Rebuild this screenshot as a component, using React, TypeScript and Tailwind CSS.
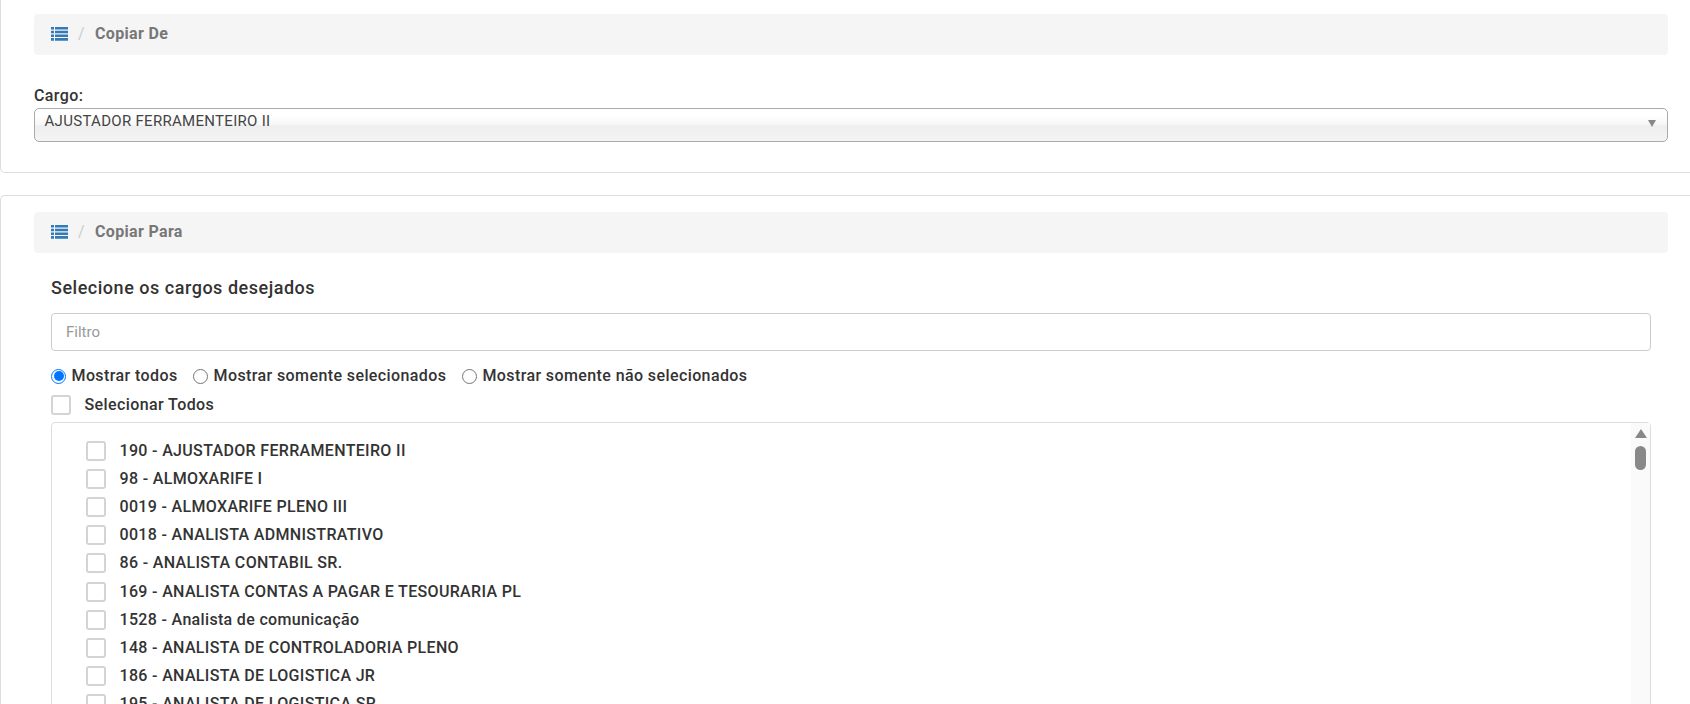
import React from 'react';

const cargos = [
  '190 - AJUSTADOR FERRAMENTEIRO II',
  '98 - ALMOXARIFE I',
  '0019 - ALMOXARIFE PLENO III',
  '0018 - ANALISTA ADMNISTRATIVO',
  '86 - ANALISTA CONTABIL SR.',
  '169 - ANALISTA CONTAS A PAGAR E TESOURARIA PL',
  '1528 - Analista de comunicação',
  '148 - ANALISTA DE CONTROLADORIA PLENO',
  '186 - ANALISTA DE LOGISTICA JR',
  '195 - ANALISTA DE LOGISTICA SR',
];

function ListIcon() {
  return (
    <svg viewBox="0 0 17 14" className="h-[14px] w-[17px] fill-[#337ab7]">
      <path d="M0 0h3v2.6H0zM4 0h13v2.6H4zM0 3.7h3v2.6H0zM4 3.7h13v2.6H4zM0 7.4h3V10H0zM4 7.4h13V10H4zM0 11.1h3v2.6H0zM4 11.1h13v2.6H4z" />
    </svg>
  );
}

function Breadcrumb({ title }: { title: string }) {
  return (
    <div className="flex h-[41px] items-center rounded-[4px] bg-[#f5f5f5] pb-[1px] pl-[17px] text-[16px] tracking-[.34px]">
      <ListIcon />
      <span className="ml-[10px] text-[#ccc]">/</span>
      <span className="ml-[10px] font-bold text-[#777]">{title}</span>
    </div>
  );
}

function Checkbox() {
  return <span className="h-[20px] w-[20px] shrink-0 rounded-[3px] border-2 border-[#d4d4d4] bg-white" />;
}

function Radio({ checked, label }: { checked?: boolean; label: string }) {
  return (
    <label className="flex items-center">
      {checked ? (
        <span className="flex h-[15px] w-[15px] items-center justify-center rounded-full border-[1.5px] border-[#0075ff]">
          <span className="h-[10px] w-[10px] rounded-full bg-[#0075ff]" />
        </span>
      ) : (
        <span className="h-[15px] w-[15px] rounded-full border border-[#767676] bg-white" />
      )}
      <span className="ml-[5.5px]">{label}</span>
    </label>
  );
}

export default function App() {
  return (
    <div className="h-[704px] overflow-hidden bg-white font-['Roboto',sans-serif] text-[#333]">
      <div className="-mt-[8px] h-[181px] rounded-bl-[5px] border-b border-l border-[#ddd] pl-[33px] pr-[22px] pt-[22px]">
        <Breadcrumb title="Copiar De" />
        <div className="mt-[31px] text-[16px] font-medium leading-[20px] tracking-[.4px]">Cargo:</div>
        <div className="relative mt-[2px] flex h-[34px] items-center rounded-[5px] border border-[#aaa] bg-[linear-gradient(#fff_20%,#f6f6f6_50%,#eee_52%,#f4f4f4_100%)] pb-[7px] pl-[9.5px] text-[15px] tracking-[.3px] text-[#444]">
          AJUSTADOR FERRAMENTEIRO II
          <span className="absolute right-[11px] top-[11px] h-0 w-0 border-x-[4.5px] border-t-[7px] border-x-transparent border-t-[#888]" />
        </div>
      </div>

      <div className="mt-[22px] rounded-tl-[5px] border-l border-t border-[#ddd] pl-[33px] pr-[22px] pt-[16px]">
        <Breadcrumb title="Copiar Para" />
        <div className="pl-[17px] pr-[17px]">
          <h2 className="mt-[24px] text-[18px] font-medium leading-[22px] tracking-[.52px]">Selecione os cargos desejados</h2>
          <input
            placeholder="Filtro"
            className="mt-[14px] block h-[38px] w-full rounded-[4px] border border-[#ccc] px-[14px] text-[15px] outline-none placeholder:text-[#999]"
          />
          <div className="mt-[15px] flex gap-[15.5px] text-[16px] font-medium leading-[20px] tracking-[.4px]">
            <Radio checked label="Mostrar todos" />
            <Radio label="Mostrar somente selecionados" />
            <Radio label="Mostrar somente não selecionados" />
          </div>
          <div className="mt-[7px] flex items-center text-[16px] font-medium tracking-[.4px]">
            <Checkbox />
            <span className="ml-[13.5px]">Selecionar Todos</span>
          </div>
          <div className="mt-[5px] flex h-[400px] rounded-[4px] border border-[#ddd]">
            <div className="flex-1 pl-[34px] pt-[14px] text-[16px] font-medium tracking-[.33px]">
              {cargos.map((cargo) => (
                <div key={cargo} className="flex h-[28.1px] items-center">
                  <Checkbox />
                  <span className="ml-[13.5px]">{cargo}</span>
                </div>
              ))}
            </div>
            <div className="flex w-[19px] flex-col items-center bg-[#fafafa] pt-[6px]">
              <span className="h-0 w-0 border-x-[6.5px] border-b-[9px] border-x-transparent border-b-[#888]" />
              <span className="mt-[8px] h-[24px] w-[11px] rounded-full bg-[#888]" />
            </div>
          </div>
        </div>
      </div>
    </div>
  );
}
